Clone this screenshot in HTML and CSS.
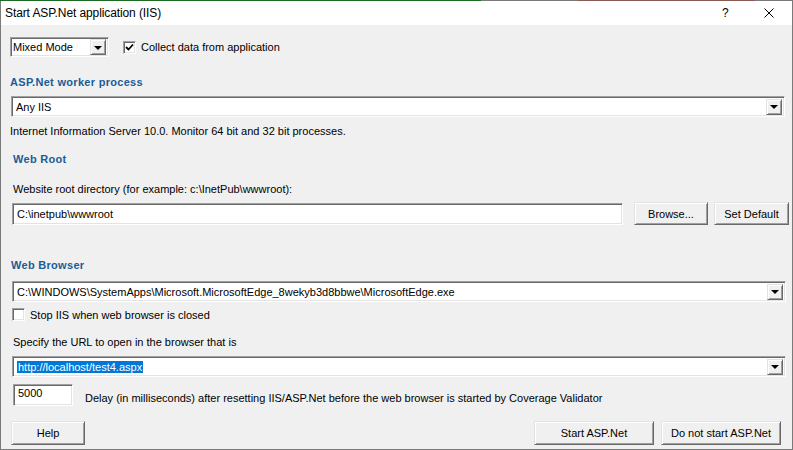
FILE: index.html
```
<!DOCTYPE html>
<html lang="en">
<head>
    <meta charset="UTF-8">
    <title>Start ASP.Net application (IIS)</title>
    <link rel="stylesheet" href="styles.css">
</head>
<body>
    <div class="window">
        <div class="titlebar">
            <span class="title">Start ASP.Net application (IIS)</span>
            <span class="help-btn">?</span>
            <span class="close-btn">
                <svg width="10" height="10" viewBox="0 0 10 10"><path d="M0.5 0.5 L9.5 9.5 M9.5 0.5 L0.5 9.5" stroke="#000" stroke-width="1" fill="none"/></svg>
            </span>
        </div>

        <div class="content">
            <div class="row top-row">
                <div class="combo mode-combo">
                    <span class="combo-text">Mixed Mode</span>
                    <span class="drop"></span>
                </div>
                <label class="check collect">
                    <span class="box checked">
                        <svg width="9" height="9" viewBox="0 0 9 9"><path d="M1 4 L3.5 6.5 L8 1.5" stroke="#000" stroke-width="1.8" fill="none"/></svg>
                    </span>
                    Collect data from application
                </label>
            </div>

            <h2 class="heading worker">ASP.Net worker process</h2>
            <div class="combo wide iis-combo">
                <span class="combo-text">Any IIS</span>
                <span class="drop"></span>
            </div>
            <p class="text info">Internet Information Server 10.0. Monitor 64 bit and 32 bit processes.</p>

            <h2 class="heading webroot">Web Root</h2>
            <p class="text root-label">Website root directory (for example: c:\InetPub\wwwroot):</p>
            <div class="row root-row">
                <div class="field root-field">C:\inetpub\wwwroot</div>
                <button class="btn browse">Browse...</button>
                <button class="btn set-default">Set Default</button>
            </div>

            <h2 class="heading browser">Web Browser</h2>
            <div class="combo wide browser-combo">
                <span class="combo-text">C:\WINDOWS\SystemApps\Microsoft.MicrosoftEdge_8wekyb3d8bbwe\MicrosoftEdge.exe</span>
                <span class="drop"></span>
            </div>
            <label class="check stop-iis">
                <span class="box"></span>
                Stop IIS when web browser is closed
            </label>

            <p class="text url-label">Specify the URL to open in the browser that is</p>
            <div class="combo wide url-combo">
                <span class="combo-text"><span class="selected">http://localhost/test4.aspx</span></span>
                <span class="drop"></span>
            </div>

            <div class="row delay-row">
                <div class="field delay-field">5000</div>
                <span class="text delay-label">Delay (in milliseconds) after resetting IIS/ASP.Net before the web browser is started by Coverage Validator</span>
            </div>

            <div class="row footer">
                <button class="btn help">Help</button>
                <div class="spacer"></div>
                <button class="btn start">Start ASP.Net</button>
                <button class="btn no-start">Do not start ASP.Net</button>
            </div>
        </div>
    </div>
</body>
</html>
```

FILE: styles.css
```
html,
body {
    margin: 0;
    padding: 0;
}

body {
    width: 793px;
    height: 450px;
    overflow: hidden;
    background-color: #f0f0f0;
    font-family: 'Liberation Sans', Arial, sans-serif;
    font-size: 11px;
    color: #000;
}

.window {
    box-sizing: border-box;
    width: 793px;
    height: 450px;
    border: 1px solid #7a7a7a;
    border-top: none;
    background-color: #f0f0f0;
}

.window::before {
    content: "";
    display: block;
    height: 1px;
    margin: 0 -1px;
    background: linear-gradient(to right, #1d6b22 0, #1d6b22 481px, #7a7a7a 481px, #7a7a7a 578px, #8a5a55 578px, #8a5a55 755px, #7a7a7a 755px);
}

.titlebar {
    height: 24px;
    background-color: #ffffff;
    display: flex;
    align-items: center;
}

.title {
    padding-left: 4px;
    font-size: 12px;
    letter-spacing: -0.1px;
    flex: 1;
}

.help-btn {
    font-size: 12px;
    width: 10px;
    margin-right: 32px;
}

.close-btn {
    display: flex;
    margin-right: 18px;
}

.content {
    padding: 0 3px 0 9px;
}

.row {
    display: flex;
    align-items: center;
}

.text {
    margin: 0;
    line-height: 14px;
    white-space: nowrap;
}

.heading {
    margin: 0;
    font-size: 11px;
    font-weight: bold;
    line-height: 14px;
    color: #1b5c97;
    letter-spacing: 0.3px;
}

/* sunken controls */
.combo,
.field,
.box {
    box-sizing: border-box;
    background-color: #ffffff;
    border-style: solid;
    border-width: 1px;
    border-color: #a0a0a0 #ffffff #ffffff #a0a0a0;
    box-shadow: inset 1px 1px 0 #696969, inset -1px -1px 0 #e3e3e3;
}

.combo {
    display: flex;
    align-items: center;
    padding: 2px 2px 2px 4px;
}

.combo-text {
    flex: 1;
    white-space: nowrap;
    overflow: hidden;
}

.drop {
    box-sizing: border-box;
    width: 16px;
    height: 16px;
    background-color: #f0f0f0;
    border-style: solid;
    border-width: 1px;
    border-color: #e3e3e3 #696969 #696969 #e3e3e3;
    box-shadow: inset 1px 1px 0 #ffffff, inset -1px -1px 0 #a0a0a0;
    display: flex;
    align-items: center;
    justify-content: center;
}

.drop::after {
    content: "";
    border-left: 4px solid transparent;
    border-right: 4px solid transparent;
    border-top: 4px solid #000;
    margin-top: 1px;
}

.field {
    padding: 3px 4px;
    height: 22px;
    line-height: 14px;
}

.btn {
    box-sizing: border-box;
    flex-shrink: 0;
    height: 23px;
    padding: 0;
    font-family: inherit;
    font-size: 11px;
    color: #000;
    background-color: #f0f0f0;
    border-style: solid;
    border-width: 1px;
    border-color: #e3e3e3 #696969 #696969 #e3e3e3;
    box-shadow: inset 1px 1px 0 #ffffff, inset -1px -1px 0 #a0a0a0;
}

.check {
    display: flex;
    align-items: center;
}

.box {
    width: 13px;
    height: 13px;
    display: flex;
    align-items: center;
    justify-content: center;
}

/* rows */
.top-row {
    margin-top: 12px;
}

.mode-combo {
    width: 99px;
    height: 20px;
    padding-left: 2px;
}

.collect {
    margin-left: 14px;
}

.collect .box {
    margin-right: 5px;
}

.worker {
    margin-top: 18px;
}

.wide {
    margin-left: 2px;
    width: 774px;
    height: 21px;
}

.iis-combo {
    margin-top: 7px;
    margin-left: 1px;
}

.info {
    margin-top: 7px;
}

.webroot {
    margin-top: 14px;
    margin-left: 3px;
}

.root-label {
    margin-top: 16px;
    margin-left: 3px;
}

.root-row {
    margin-top: 6px;
    margin-left: 2px;
}

.root-field {
    width: 611px;
    flex-shrink: 0;
}

.browse {
    width: 74px;
    margin-left: 11px;
}

.set-default {
    width: 75px;
    margin-left: 6px;
}

.browser {
    margin-top: 33px;
    margin-left: 1px;
}

.browser-combo {
    margin-top: 9px;
}

.stop-iis {
    margin-top: 6px;
    margin-left: 2px;
}

.stop-iis .box {
    margin-right: 5px;
}

.url-label {
    margin-top: 14px;
    margin-left: 3px;
}

.url-combo {
    margin-top: 7px;
    padding-left: 4px;
}

.selected {
    background-color: #0078d7;
    color: #ffffff;
    padding: 0 1px;
}

.delay-row {
    margin-top: 7px;
    margin-left: 3px;
}

.delay-field {
    width: 60px;
    padding-top: 1px;
}

.delay-label {
    margin-left: 12px;
    margin-top: 5px;
}

.footer {
    margin-top: 15px;
    padding-right: 8px;
}

.help {
    width: 74px;
    height: 24px;
    margin-left: 1px;
}

.spacer {
    flex: 1;
}

.start {
    width: 120px;
    height: 24px;
}

.no-start {
    width: 120px;
    height: 24px;
    margin-left: 7px;
}
```
